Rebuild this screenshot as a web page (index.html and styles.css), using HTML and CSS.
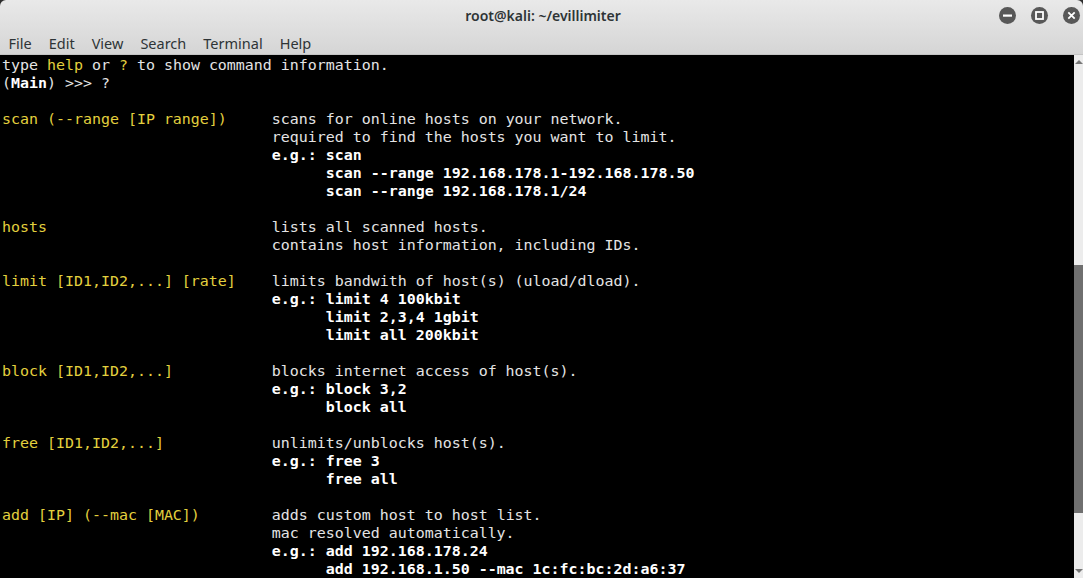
FILE: index.html
```html
<!DOCTYPE html>
<html lang="en">
<head>
    <meta charset="UTF-8">
    <title>root@kali: ~/evillimiter</title>
    <link rel="stylesheet" href="styles.css">
</head>
<body>
    <div class="window">
        <div class="header">
            <div class="titlebar">
                <span class="title">root@kali: ~/evillimiter</span>
                <div class="controls">
                    <span class="btn">
                        <svg width="17" height="17" viewBox="0 0 17 17"><rect x="4" y="7.5" width="9" height="2.2" fill="#fff"/></svg>
                    </span>
                    <span class="btn">
                        <svg width="17" height="17" viewBox="0 0 17 17"><rect x="5" y="5" width="7" height="7" fill="none" stroke="#fff" stroke-width="1.8"/></svg>
                    </span>
                    <span class="btn">
                        <svg width="17" height="17" viewBox="0 0 17 17"><path d="M5.3 5.3 L11.7 11.7 M11.7 5.3 L5.3 11.7" stroke="#fff" stroke-width="1.8"/></svg>
                    </span>
                </div>
            </div>
            <ul class="menubar">
                <li>File</li>
                <li>Edit</li>
                <li>View</li>
                <li>Search</li>
                <li>Terminal</li>
                <li>Help</li>
            </ul>
        </div>
        <div class="terminal">
<pre class="screen">type <span class="y">help</span> or <span class="y">?</span> to show command information.
(<b>Main</b>) &gt;&gt;&gt; ?

<span class="y">scan (--range [IP range])</span>     scans for online hosts on your network.
                              required to find the hosts you want to limit.
                              <b>e.g.: scan</b>
                              <b>      scan --range 192.168.178.1-192.168.178.50</b>
                              <b>      scan --range 192.168.178.1/24</b>

<span class="y">hosts</span>                         lists all scanned hosts.
                              contains host information, including IDs.

<span class="y">limit [ID1,ID2,...] [rate]</span>    limits bandwith of host(s) (uload/dload).
                              <b>e.g.: limit 4 100kbit</b>
                              <b>      limit 2,3,4 1gbit</b>
                              <b>      limit all 200kbit</b>

<span class="y">block [ID1,ID2,...]</span>           blocks internet access of host(s).
                              <b>e.g.: block 3,2</b>
                              <b>      block all</b>

<span class="y">free [ID1,ID2,...]</span>            unlimits/unblocks host(s).
                              <b>e.g.: free 3</b>
                              <b>      free all</b>

<span class="y">add [IP] (--mac [MAC])</span>        adds custom host to host list.
                              mac resolved automatically.
                              <b>e.g.: add 192.168.178.24</b>
                              <b>      add 192.168.1.50 --mac 1c:fc:bc:2d:a6:37</b></pre>
            <div class="scrollbar">
                <span class="arrow up"></span>
                <span class="thumb"></span>
                <span class="arrow down"></span>
            </div>
        </div>
    </div>
</body>
</html>
```

FILE: styles.css
```css
* {
    box-sizing: border-box;
    margin: 0;
    padding: 0;
}
html, body {
    width: 1083px;
    height: 578px;
    overflow: hidden;
    background: #2d2d2d;
}
.window {
    display: flex;
    flex-direction: column;
    height: 578px;
    border-radius: 6px 6px 0 0;
    overflow: hidden;
}
.header {
    height: 55px;
    background: linear-gradient(#e9e9e9, #d5d5d5);
    border-bottom: 1px solid #c4c4c4;
    font-family: "Noto Sans", "Open Sans", sans-serif;
    color: #2e3436;
}
.titlebar {
    height: 31px;
    display: flex;
    align-items: center;
    justify-content: center;
    position: relative;
}
.title {
    font-size: 14px;
    font-weight: 600;
    color: #2e3436;
    margin-left: 3px;
}
.controls {
    position: absolute;
    right: 3px;
    top: 7px;
    display: flex;
    gap: 15px;
}
.btn {
    width: 17px;
    height: 17px;
    border-radius: 50%;
    background: #585858;
    display: flex;
}
.menubar {
    list-style: none;
    display: flex;
    height: 23px;
    align-items: center;
    padding: 1px 0 0 0;
    font-size: 14.5px;
}
.menubar li {
    padding: 0 8.5px;
}
.terminal {
    flex: 1;
    display: flex;
    background: #000;
    min-height: 0;
}
.screen {
    flex: 1;
    padding: 1px 0 0 2px;
    font-family: "DejaVu Sans Mono", monospace;
    font-size: 14.95px;
    line-height: 18px;
    color: #e4e4e4;
    white-space: pre;
    overflow: hidden;
}
.screen b {
    color: #fff;
}
.y {
    color: #e3d03e;
}
.scrollbar {
    width: 9px;
    background: #ececec;
    display: flex;
    flex-direction: column;
    align-items: flex-end;
}
.arrow {
    width: 0;
    height: 0;
    border-left: 4px solid transparent;
    border-right: 4px solid transparent;
}
.arrow.up {
    margin-top: 5px;
    border-bottom: 4px solid #777;
}
.arrow.down {
    margin-top: auto;
    margin-bottom: 5px;
    border-top: 4px solid #777;
}
.thumb {
    width: 9px;
    height: 248px;
    margin-top: 201px;
    background: #6f6f6f;
}
```
